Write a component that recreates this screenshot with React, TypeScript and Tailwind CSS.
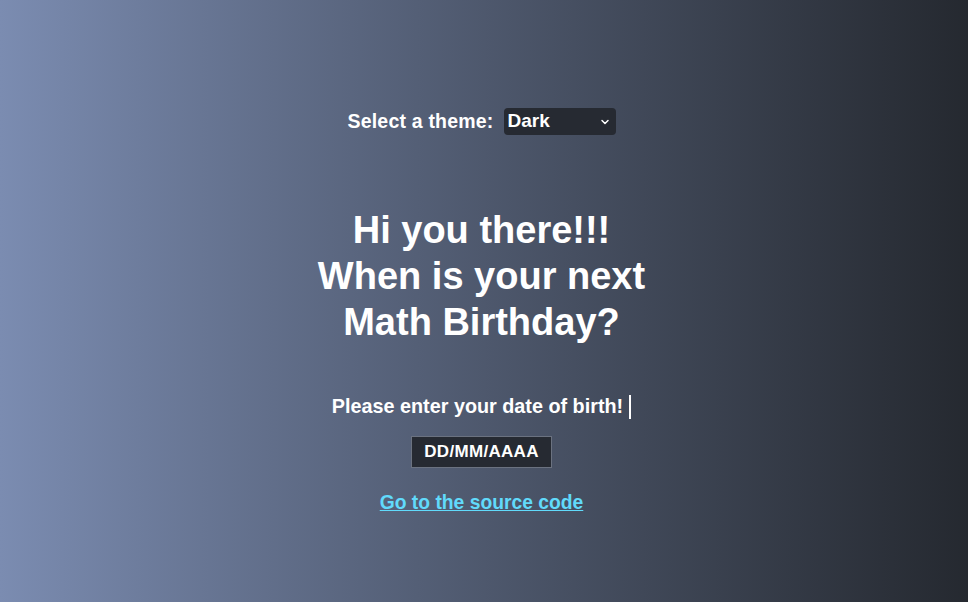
import { ChevronDown } from "lucide-react";

export default function App() {
  return (
    <div
      className="w-full h-[602px] bg-gradient-to-r from-[#7b8cb1] to-[#252930] text-white flex flex-col items-center font-bold pr-[5px]"
      style={{ fontFamily: '"Liberation Sans Narrow", "Liberation Sans", Arial, sans-serif' }}
    >
      <div className="mt-[107px] flex items-center gap-[10px]">
        <span className="text-[19.5px] tracking-[0.2px]">Select a theme:</span>
        <div className="w-[112px] h-[27px] bg-[#262a32] rounded-[4px] flex items-center justify-between pl-[4px] pr-[5px]">
          <span className="text-[19px]">Dark</span>
          <ChevronDown size={12} strokeWidth={3} />
        </div>
      </div>

      <h1 className="mt-[71px] text-[38px] leading-[46px] text-center">
        Hi you there!!!
        <br />
        When is your next
        <br />
        Math Birthday?
      </h1>

      <div className="mt-[47px] flex items-center">
        <span className="text-[19.8px]">Please enter your date of birth!</span>
        <span className="ml-[6px] w-[2px] h-[24px] bg-white" />
      </div>

      <div className="mt-[14px] w-[141px] h-[32px] bg-[#262a32] border border-[#6b7280] flex items-center justify-center text-[17px] tracking-[0.3px]">
        DD/MM/AAAA
      </div>

      <a href="#" className="mt-[21px] text-[19.3px] text-[#61dafb] underline">
        Go to the source code
      </a>
    </div>
  );
}
